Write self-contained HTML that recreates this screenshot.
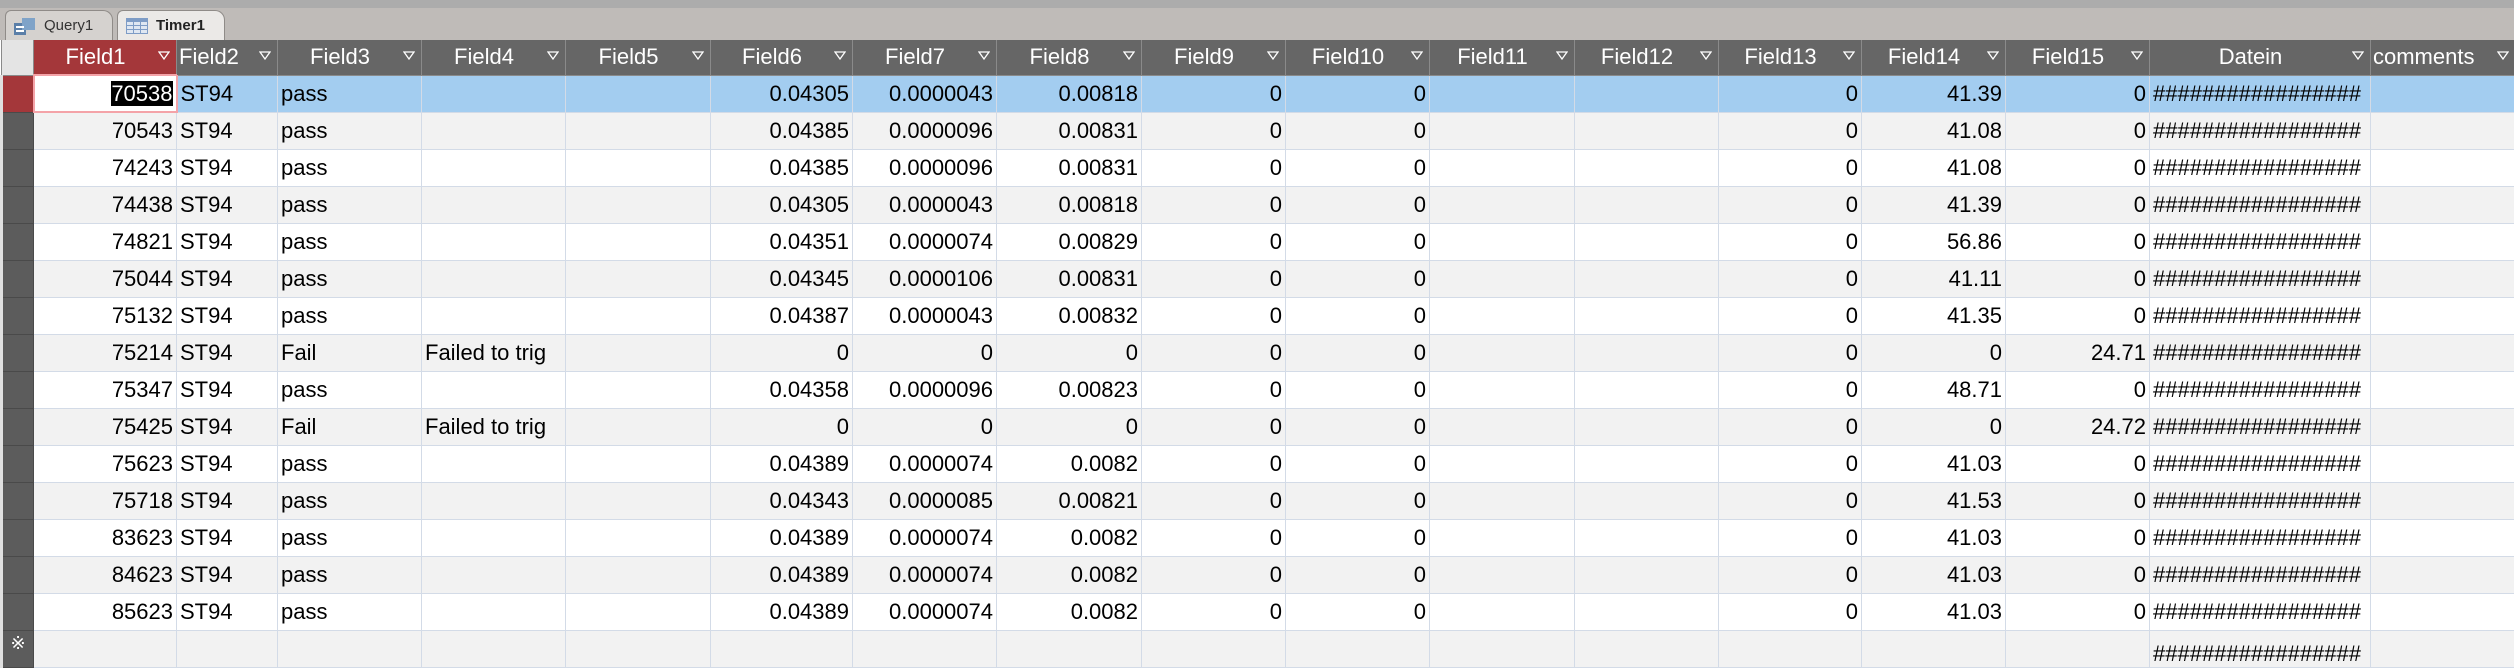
<!DOCTYPE html>
<html><head><meta charset="utf-8"><style>
html,body{margin:0;padding:0;width:2514px;height:670px;overflow:hidden;background:#fff;font-family:"Liberation Sans Narrow","Liberation Sans",sans-serif;}
.top{position:absolute;left:0;top:0;width:2514px;height:8px;background:#acacac;}
.tabs{position:absolute;left:0;top:8px;width:2514px;height:32px;background:#bfbbb8;}
.tab{position:absolute;top:2px;height:30px;border:1px solid #8f8b88;border-bottom:none;border-radius:6px 10px 0 0;font-size:15px;line-height:30px;color:#333;}
.t1{left:5px;width:106px;background:#d5d2cf;}
.t2{left:117px;width:106px;background:#ebe9e7;font-weight:bold;color:#222;}
.tab svg{position:absolute;left:8px;top:7px;}
.tab span{position:absolute;left:38px;}
table{position:absolute;left:0;top:40px;border-collapse:collapse;table-layout:fixed;width:2514px;}
td,th{height:37px;padding:0 3px;font-size:22px;white-space:nowrap;overflow:hidden;border:1px solid #d3dbe7;box-sizing:border-box;color:#000;font-weight:normal;}
th{height:35px;background:#666;color:#fff;border:1px solid #8a8a8a;border-top:none;position:relative;text-align:center;padding-right:22px;}
th svg{position:absolute;right:6px;top:11px;}
th.sel{background:#a4373a;}
th.corner{background:#e4e4e4;padding:0;}
td.rs{background:#5c5c5c;border:1px solid #4a4a4a;border-left:3px solid #e0e0e0;padding:0;}
td.rs.cur{background:#a4373a;}
.r{text-align:right;}
tr.g td{background:#f2f2f2;}
tr.s td{background:#a3cdf0;}
tr.s td.f1{background:#fff;border:2px solid #f4a3a8;}
tr.g td.rs,tr td.rs{background:#5c5c5c;}
tr.s td.rs{background:#a4373a;}
.hl{background:#000;color:#fff;}
</style></head><body>
<div class="top"></div>
<div class="tabs">
<div class="tab t1"><svg width="22" height="18"><rect x="0" y="5" width="12" height="12" fill="#5b7fa8"/><rect x="8" y="0" width="13" height="12" fill="#7fa3c8"/><rect x="2" y="8" width="8" height="2" fill="#fff"/><rect x="2" y="12" width="8" height="2" fill="#fff"/></svg><span>Query1</span></div>
<div class="tab t2"><svg width="22" height="16"><rect x="0" y="0" width="22" height="16" fill="#7e9cc6"/><g fill="#dfe7f2"><rect x="1" y="4" width="6" height="3"/><rect x="8" y="4" width="6" height="3"/><rect x="15" y="4" width="6" height="3"/><rect x="1" y="8" width="6" height="3"/><rect x="8" y="8" width="6" height="3"/><rect x="15" y="8" width="6" height="3"/><rect x="1" y="12" width="6" height="3"/><rect x="8" y="12" width="6" height="3"/><rect x="15" y="12" width="6" height="3"/></g></svg><span>Timer1</span></div>
</div>
<table>
<colgroup><col style="width:32px"><col style="width:143px"><col style="width:101px"><col style="width:144px"><col style="width:144px"><col style="width:145px"><col style="width:142px"><col style="width:144px"><col style="width:145px"><col style="width:144px"><col style="width:144px"><col style="width:145px"><col style="width:144px"><col style="width:143px"><col style="width:144px"><col style="width:144px"><col style="width:221px"><col style="width:145px"></colgroup>
<tr><th class="corner"></th>
<th class="sel">Field1<svg width="12" height="9"><path d="M1 1H11L6 8Z" fill="none" stroke="#fff" stroke-width="1.3"/></svg></th>
<th style="padding:0 18px 0 2px;text-align:left">Field2<svg width="12" height="9"><path d="M1 1H11L6 8Z" fill="none" stroke="#fff" stroke-width="1.3"/></svg></th>
<th>Field3<svg width="12" height="9"><path d="M1 1H11L6 8Z" fill="none" stroke="#fff" stroke-width="1.3"/></svg></th>
<th>Field4<svg width="12" height="9"><path d="M1 1H11L6 8Z" fill="none" stroke="#fff" stroke-width="1.3"/></svg></th>
<th>Field5<svg width="12" height="9"><path d="M1 1H11L6 8Z" fill="none" stroke="#fff" stroke-width="1.3"/></svg></th>
<th>Field6<svg width="12" height="9"><path d="M1 1H11L6 8Z" fill="none" stroke="#fff" stroke-width="1.3"/></svg></th>
<th>Field7<svg width="12" height="9"><path d="M1 1H11L6 8Z" fill="none" stroke="#fff" stroke-width="1.3"/></svg></th>
<th>Field8<svg width="12" height="9"><path d="M1 1H11L6 8Z" fill="none" stroke="#fff" stroke-width="1.3"/></svg></th>
<th>Field9<svg width="12" height="9"><path d="M1 1H11L6 8Z" fill="none" stroke="#fff" stroke-width="1.3"/></svg></th>
<th>Field10<svg width="12" height="9"><path d="M1 1H11L6 8Z" fill="none" stroke="#fff" stroke-width="1.3"/></svg></th>
<th>Field11<svg width="12" height="9"><path d="M1 1H11L6 8Z" fill="none" stroke="#fff" stroke-width="1.3"/></svg></th>
<th>Field12<svg width="12" height="9"><path d="M1 1H11L6 8Z" fill="none" stroke="#fff" stroke-width="1.3"/></svg></th>
<th>Field13<svg width="12" height="9"><path d="M1 1H11L6 8Z" fill="none" stroke="#fff" stroke-width="1.3"/></svg></th>
<th>Field14<svg width="12" height="9"><path d="M1 1H11L6 8Z" fill="none" stroke="#fff" stroke-width="1.3"/></svg></th>
<th>Field15<svg width="12" height="9"><path d="M1 1H11L6 8Z" fill="none" stroke="#fff" stroke-width="1.3"/></svg></th>
<th>Datein<svg width="12" height="9"><path d="M1 1H11L6 8Z" fill="none" stroke="#fff" stroke-width="1.3"/></svg></th>
<th style="text-align:left;padding-left:2px">comments<svg width="12" height="9"><path d="M1 1H11L6 8Z" fill="none" stroke="#fff" stroke-width="1.3"/></svg></th></tr>
<tr class="s"><td class="rs"></td><td class="r f1"><span class="hl">70538</span></td><td>ST94</td><td>pass</td><td></td><td></td><td class="r">0.04305</td><td class="r">0.0000043</td><td class="r">0.00818</td><td class="r">0</td><td class="r">0</td><td></td><td></td><td class="r">0</td><td class="r">41.39</td><td class="r">0</td><td>#################</td><td></td></tr>
<tr class="g"><td class="rs"></td><td class="r">70543</td><td>ST94</td><td>pass</td><td></td><td></td><td class="r">0.04385</td><td class="r">0.0000096</td><td class="r">0.00831</td><td class="r">0</td><td class="r">0</td><td></td><td></td><td class="r">0</td><td class="r">41.08</td><td class="r">0</td><td>#################</td><td></td></tr>
<tr><td class="rs"></td><td class="r">74243</td><td>ST94</td><td>pass</td><td></td><td></td><td class="r">0.04385</td><td class="r">0.0000096</td><td class="r">0.00831</td><td class="r">0</td><td class="r">0</td><td></td><td></td><td class="r">0</td><td class="r">41.08</td><td class="r">0</td><td>#################</td><td></td></tr>
<tr class="g"><td class="rs"></td><td class="r">74438</td><td>ST94</td><td>pass</td><td></td><td></td><td class="r">0.04305</td><td class="r">0.0000043</td><td class="r">0.00818</td><td class="r">0</td><td class="r">0</td><td></td><td></td><td class="r">0</td><td class="r">41.39</td><td class="r">0</td><td>#################</td><td></td></tr>
<tr><td class="rs"></td><td class="r">74821</td><td>ST94</td><td>pass</td><td></td><td></td><td class="r">0.04351</td><td class="r">0.0000074</td><td class="r">0.00829</td><td class="r">0</td><td class="r">0</td><td></td><td></td><td class="r">0</td><td class="r">56.86</td><td class="r">0</td><td>#################</td><td></td></tr>
<tr class="g"><td class="rs"></td><td class="r">75044</td><td>ST94</td><td>pass</td><td></td><td></td><td class="r">0.04345</td><td class="r">0.0000106</td><td class="r">0.00831</td><td class="r">0</td><td class="r">0</td><td></td><td></td><td class="r">0</td><td class="r">41.11</td><td class="r">0</td><td>#################</td><td></td></tr>
<tr><td class="rs"></td><td class="r">75132</td><td>ST94</td><td>pass</td><td></td><td></td><td class="r">0.04387</td><td class="r">0.0000043</td><td class="r">0.00832</td><td class="r">0</td><td class="r">0</td><td></td><td></td><td class="r">0</td><td class="r">41.35</td><td class="r">0</td><td>#################</td><td></td></tr>
<tr class="g"><td class="rs"></td><td class="r">75214</td><td>ST94</td><td>Fail</td><td>Failed to trig</td><td></td><td class="r">0</td><td class="r">0</td><td class="r">0</td><td class="r">0</td><td class="r">0</td><td></td><td></td><td class="r">0</td><td class="r">0</td><td class="r">24.71</td><td>#################</td><td></td></tr>
<tr><td class="rs"></td><td class="r">75347</td><td>ST94</td><td>pass</td><td></td><td></td><td class="r">0.04358</td><td class="r">0.0000096</td><td class="r">0.00823</td><td class="r">0</td><td class="r">0</td><td></td><td></td><td class="r">0</td><td class="r">48.71</td><td class="r">0</td><td>#################</td><td></td></tr>
<tr class="g"><td class="rs"></td><td class="r">75425</td><td>ST94</td><td>Fail</td><td>Failed to trig</td><td></td><td class="r">0</td><td class="r">0</td><td class="r">0</td><td class="r">0</td><td class="r">0</td><td></td><td></td><td class="r">0</td><td class="r">0</td><td class="r">24.72</td><td>#################</td><td></td></tr>
<tr><td class="rs"></td><td class="r">75623</td><td>ST94</td><td>pass</td><td></td><td></td><td class="r">0.04389</td><td class="r">0.0000074</td><td class="r">0.0082</td><td class="r">0</td><td class="r">0</td><td></td><td></td><td class="r">0</td><td class="r">41.03</td><td class="r">0</td><td>#################</td><td></td></tr>
<tr class="g"><td class="rs"></td><td class="r">75718</td><td>ST94</td><td>pass</td><td></td><td></td><td class="r">0.04343</td><td class="r">0.0000085</td><td class="r">0.00821</td><td class="r">0</td><td class="r">0</td><td></td><td></td><td class="r">0</td><td class="r">41.53</td><td class="r">0</td><td>#################</td><td></td></tr>
<tr><td class="rs"></td><td class="r">83623</td><td>ST94</td><td>pass</td><td></td><td></td><td class="r">0.04389</td><td class="r">0.0000074</td><td class="r">0.0082</td><td class="r">0</td><td class="r">0</td><td></td><td></td><td class="r">0</td><td class="r">41.03</td><td class="r">0</td><td>#################</td><td></td></tr>
<tr class="g"><td class="rs"></td><td class="r">84623</td><td>ST94</td><td>pass</td><td></td><td></td><td class="r">0.04389</td><td class="r">0.0000074</td><td class="r">0.0082</td><td class="r">0</td><td class="r">0</td><td></td><td></td><td class="r">0</td><td class="r">41.03</td><td class="r">0</td><td>#################</td><td></td></tr>
<tr><td class="rs"></td><td class="r">85623</td><td>ST94</td><td>pass</td><td></td><td></td><td class="r">0.04389</td><td class="r">0.0000074</td><td class="r">0.0082</td><td class="r">0</td><td class="r">0</td><td></td><td></td><td class="r">0</td><td class="r">41.03</td><td class="r">0</td><td>#################</td><td></td></tr>
<tr class="g"><td class="rs" style="color:#fff;font-size:18px;vertical-align:top;text-align:center;padding-top:2px">&#8251;</td><td></td><td></td><td></td><td></td><td></td><td></td><td></td><td></td><td></td><td></td><td></td><td></td><td></td><td></td><td></td><td style="vertical-align:bottom">#################</td><td></td></tr>
</table>
</body></html>
